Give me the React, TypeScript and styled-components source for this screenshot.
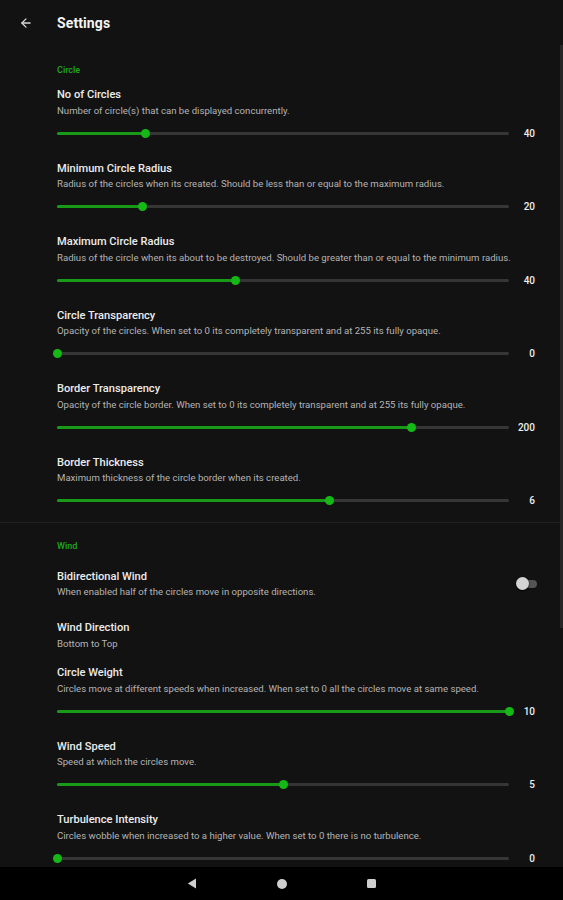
import React from 'react';
import styled, { createGlobalStyle } from 'styled-components';
import { ArrowLeft } from 'lucide-react';

const GlobalStyle = createGlobalStyle`
  html, body {
    margin: 0;
    padding: 0;
    background: #121212;
  }
  body {
    font-family: Roboto, "Noto Sans", sans-serif;
    -webkit-font-smoothing: antialiased;
  }
`;

type SliderSetting = {
  kind: 'slider';
  title: string;
  text: string;
  value: number;
  pct: number;
};

type ToggleSetting = {
  kind: 'toggle';
  title: string;
  text: string;
  on: boolean;
};

type ChoiceSetting = {
  kind: 'choice';
  title: string;
  text: string;
};

type Setting = SliderSetting | ToggleSetting | ChoiceSetting;

const circleSettings: Setting[] = [
  { kind: 'slider', title: 'No of Circles', text: 'Number of circle(s) that can be displayed concurrently.', value: 40, pct: 0.195 },
  { kind: 'slider', title: 'Minimum Circle Radius', text: 'Radius of the circles when its created. Should be less than or equal to the maximum radius.', value: 20, pct: 0.19 },
  { kind: 'slider', title: 'Maximum Circle Radius', text: 'Radius of the circle when its about to be destroyed. Should be greater than or equal to the minimum radius.', value: 40, pct: 0.394 },
  { kind: 'slider', title: 'Circle Transparency', text: 'Opacity of the circles. When set to 0 its completely transparent and at 255 its fully opaque.', value: 0, pct: 0 },
  { kind: 'slider', title: 'Border Transparency', text: 'Opacity of the circle border. When set to 0 its completely transparent and at 255 its fully opaque.', value: 200, pct: 0.784 },
  { kind: 'slider', title: 'Border Thickness', text: 'Maximum thickness of the circle border when its created.', value: 6, pct: 0.602 },
];

const windSettings: Setting[] = [
  { kind: 'toggle', title: 'Bidirectional Wind', text: 'When enabled half of the circles move in opposite directions.', on: false },
  { kind: 'choice', title: 'Wind Direction', text: 'Bottom to Top' },
  { kind: 'slider', title: 'Circle Weight', text: 'Circles move at different speeds when increased. When set to 0 all the circles move at same speed.', value: 10, pct: 1 },
  { kind: 'slider', title: 'Wind Speed', text: 'Speed at which the circles move.', value: 5, pct: 0.5 },
  { kind: 'slider', title: 'Turbulence Intensity', text: 'Circles wobble when increased to a higher value. When set to 0 there is no turbulence.', value: 0, pct: 0 },
];

const Screen = styled.div`
  position: relative;
  width: 563px;
  height: 900px;
  display: flex;
  flex-direction: column;
  background: #121212;
  overflow: hidden;
`;

const AppBar = styled.header`
  height: 46px;
  flex-shrink: 0;
  display: flex;
  align-items: center;
  color: #f2f2f2;
`;

const BackButton = styled.div`
  width: 57px;
  display: flex;
  justify-content: center;
  padding-right: 5px;
  box-sizing: border-box;
  color: #d8d8d8;
`;

const Title = styled.h1`
  margin: 0;
  font-size: 14px;
  font-weight: 700;
  letter-spacing: 0.1px;
  color: #f4f4f4;
`;

const Content = styled.main`
  flex: 1;
  overflow: hidden;
`;

const Section = styled.section<{ $divider?: boolean }>`
  padding: 17px 28px 0 57px;
  border-top: ${(p) => (p.$divider ? '1px solid #222222' : 'none')};
  margin-top: ${(p) => (p.$divider ? '9px' : '0')};
  padding-top: ${(p) => (p.$divider ? '16px' : '17px')};
`;

const Category = styled.div`
  font-size: 9px;
  line-height: 14px;
  font-weight: 500;
  color: #1faa1f;
  margin-bottom: 11px;
`;

const Item = styled.div<{ $top?: number; $gap: number }>`
  padding-top: ${(p) => p.$top ?? 0}px;
  padding-bottom: ${(p) => p.$gap}px;
  &:last-child {
    padding-bottom: 0;
  }
`;

const ItemHead = styled.div`
  display: flex;
  align-items: center;
  justify-content: space-between;
`;

const ItemTitle = styled.div`
  font-size: 11.1px;
  line-height: 14px;
  font-weight: 500;
  color: #ececec;
`;

const ItemText = styled.div`
  margin-top: 1.5px;
  font-size: 9.6px;
  line-height: 13px;
  color: #b4b4b4;
  white-space: nowrap;
`;

const SliderRow = styled.div`
  margin-top: 4.5px;
  height: 24px;
  display: flex;
  align-items: center;
`;

const Track = styled.div`
  position: relative;
  flex: 1;
  height: 3px;
  border-radius: 2px;
  background: #363636;
`;

const ActiveTrack = styled.div`
  position: absolute;
  left: 0;
  top: 0;
  bottom: 0;
  border-radius: 2px;
  background: #189a18;
`;

const Thumb = styled.div`
  position: absolute;
  top: 50%;
  width: 9px;
  height: 9px;
  margin-left: -4.5px;
  margin-top: -4.5px;
  border-radius: 50%;
  background: #16b816;
`;

const Value = styled.div`
  width: 26px;
  text-align: right;
  font-size: 10px;
  font-weight: 500;
  color: #eeeeee;
`;

const SwitchTrack = styled.div`
  position: relative;
  flex-shrink: 0;
  width: 18px;
  height: 8px;
  border-radius: 4px;
  background: #545454;
  margin-right: -2px;
`;

const SwitchThumb = styled.div<{ $on: boolean }>`
  position: absolute;
  top: 50%;
  left: ${(p) => (p.$on ? '12px' : '-3px')};
  width: 13px;
  height: 13px;
  margin-top: -6.5px;
  border-radius: 50%;
  background: ${(p) => (p.$on ? '#16b816' : '#d4d4d4')};
  box-shadow: 0 1px 2px rgba(0, 0, 0, 0.8);
`;

const ScrollThumb = styled.div`
  position: absolute;
  right: 0;
  top: 45px;
  width: 3px;
  height: 583px;
  background: #262626;
`;

const NavBar = styled.nav`
  height: 33px;
  flex-shrink: 0;
  background: #000000;
  display: flex;
  align-items: center;
  justify-content: center;
  gap: 78px;
`;

const NavCircle = styled.div`
  width: 10px;
  height: 10px;
  border-radius: 50%;
  background: #cfcfcf;
`;

const NavSquare = styled.div`
  width: 9px;
  height: 9px;
  border-radius: 1.5px;
  background: #cfcfcf;
`;

const NavSlot = styled.div`
  width: 12px;
  display: flex;
  justify-content: center;
`;

const Slider = ({ value, pct }: { value: number; pct: number }) => (
  <SliderRow>
    <Track>
      <ActiveTrack style={{ width: `${pct * 100}%` }} />
      <Thumb style={{ left: `${pct * 100}%` }} />
    </Track>
    <Value>{value}</Value>
  </SliderRow>
);

const SettingItem = ({ s }: { s: Setting }) => {
  if (s.kind === 'slider') {
    return (
      <Item $gap={16.5}>
        <ItemTitle>{s.title}</ItemTitle>
        <ItemText>{s.text}</ItemText>
        <Slider value={s.value} pct={s.pct} />
      </Item>
    );
  }
  if (s.kind === 'toggle') {
    return (
      <Item $top={6} $gap={23}>
        <ItemHead>
          <div>
            <ItemTitle>{s.title}</ItemTitle>
            <ItemText>{s.text}</ItemText>
          </div>
          <SwitchTrack>
            <SwitchThumb $on={s.on} />
          </SwitchTrack>
        </ItemHead>
      </Item>
    );
  }
  return (
    <Item $gap={16.5}>
      <ItemTitle>{s.title}</ItemTitle>
      <ItemText>{s.text}</ItemText>
    </Item>
  );
};

export default function App() {
  return (
    <Screen>
      <GlobalStyle />
      <AppBar>
        <BackButton>
          <ArrowLeft size={14} strokeWidth={2.2} />
        </BackButton>
        <Title>Settings</Title>
      </AppBar>
      <Content>
        <Section>
          <Category>Circle</Category>
          {circleSettings.map((s) => (
            <SettingItem key={s.title} s={s} />
          ))}
        </Section>
        <Section $divider>
          <Category>Wind</Category>
          {windSettings.map((s) => (
            <SettingItem key={s.title} s={s} />
          ))}
        </Section>
      </Content>
      <ScrollThumb />
      <NavBar>
        <NavSlot>
          <svg width="10" height="11" viewBox="0 0 10 11">
            <path d="M9 0.5 V10.5 L0.8 5.5 Z" fill="#cfcfcf" />
          </svg>
        </NavSlot>
        <NavSlot>
          <NavCircle />
        </NavSlot>
        <NavSlot>
          <NavSquare />
        </NavSlot>
      </NavBar>
    </Screen>
  );
}
